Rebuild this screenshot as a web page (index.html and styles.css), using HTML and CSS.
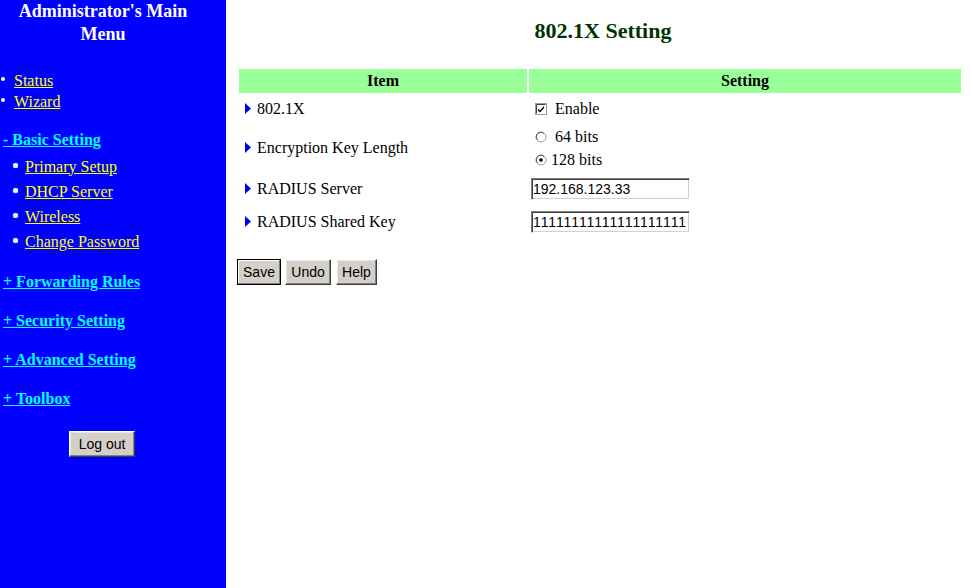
FILE: index.html
```html
<!DOCTYPE html>
<html lang="en">
<head>
    <meta charset="UTF-8">
    <title>802.1X Setting</title>
    <link rel="stylesheet" href="styles.css">
</head>
<body>
    <div class="page">
        <nav class="sidebar">
            <h2 class="menu-title">Administrator's Main<br>Menu</h2>
            <ul class="top-links">
                <li><a href="#">Status</a></li>
                <li><a href="#">Wizard</a></li>
            </ul>
            <div class="section-open"><a class="section" href="#">- Basic Setting</a></div>
            <ul class="sub-links">
                <li><a href="#">Primary Setup</a></li>
                <li><a href="#">DHCP Server</a></li>
                <li><a href="#">Wireless</a></li>
                <li><a href="#">Change Password</a></li>
            </ul>
            <div class="sections">
                <div><a class="section" href="#">+ Forwarding Rules</a></div>
                <div><a class="section" href="#">+ Security Setting</a></div>
                <div><a class="section" href="#">+ Advanced Setting</a></div>
                <div><a class="section" href="#">+ Toolbox</a></div>
            </div>
            <div class="logout-row">
                <button class="btn logout" type="button">Log out</button>
            </div>
        </nav>

        <main class="content">
            <h1 class="page-title">802.1X Setting</h1>
            <table class="setting-table">
                <thead>
                    <tr>
                        <th class="col-item">Item</th>
                        <th class="col-setting">Setting</th>
                    </tr>
                </thead>
                <tbody>
                    <tr class="row-enable">
                        <td class="item"><span class="arrow"><svg width="6" height="11" viewBox="0 0 6 11"><polygon points="0,0 6,5.5 0,11" fill="#0000ff"/></svg></span>802.1X</td>
                        <td class="setting">
                            <label class="choice">
                                <svg class="box" width="12" height="12" viewBox="0 0 12 12">
                                    <rect x="0.5" y="0.5" width="11" height="11" fill="#fff" stroke="#9a9a9a"/>
                                    <path d="M1.5 10.5V1.5H10.5" fill="none" stroke="#404040"/>
                                    <path d="M3 5.5l2 2 4-4.5v2l-4 4.5-2-2z" fill="#000"/>
                                </svg>
                                <span>&nbsp;Enable</span>
                            </label>
                        </td>
                    </tr>
                    <tr class="row-keylen">
                        <td class="item"><span class="arrow"><svg width="6" height="11" viewBox="0 0 6 11"><polygon points="0,0 6,5.5 0,11" fill="#0000ff"/></svg></span>Encryption Key Length</td>
                        <td class="setting">
                            <label class="choice">
                                <svg class="box" width="12" height="12" viewBox="0 0 12 12">
                                    <circle cx="6" cy="6" r="5" fill="#fff" stroke="#9a9a9a"/>
                                    <path d="M2.6 8.8A4 4 0 0 1 8.8 2.6" fill="none" stroke="#505050"/>
                                </svg>
                                <span>&nbsp;64 bits</span>
                            </label>
                            <label class="choice">
                                <svg class="box" width="12" height="12" viewBox="0 0 12 12">
                                    <circle cx="6" cy="6" r="5" fill="#fff" stroke="#9a9a9a"/>
                                    <path d="M2.6 8.8A4 4 0 0 1 8.8 2.6" fill="none" stroke="#505050"/>
                                    <circle cx="6" cy="6" r="1.8" fill="#000"/>
                                </svg>
                                <span>128 bits</span>
                            </label>
                        </td>
                    </tr>
                    <tr class="row-input">
                        <td class="item"><span class="arrow"><svg width="6" height="11" viewBox="0 0 6 11"><polygon points="0,0 6,5.5 0,11" fill="#0000ff"/></svg></span>RADIUS Server</td>
                        <td class="setting"><input class="field" type="text" value="192.168.123.33"></td>
                    </tr>
                    <tr class="row-input">
                        <td class="item"><span class="arrow"><svg width="6" height="11" viewBox="0 0 6 11"><polygon points="0,0 6,5.5 0,11" fill="#0000ff"/></svg></span>RADIUS Shared Key</td>
                        <td class="setting"><input class="field key-field" type="text" value="11111111111111111111"></td>
                    </tr>
                </tbody>
            </table>
            <div class="actions">
                <button class="btn btn-default save" type="button">Save</button>
                <button class="btn undo" type="button">Undo</button>
                <button class="btn help" type="button">Help</button>
            </div>
        </main>
    </div>
</body>
</html>
```

FILE: styles.css
```css
body {
    margin: 0;
    font-family: 'Liberation Serif', 'Times New Roman', serif;
    font-size: 16px;
    background-color: #fff;
}

.page {
    display: flex;
    min-height: 100vh;
}

/* left menu */
.sidebar {
    width: 206px;
    padding-right: 20px;
    background-color: #0000ff;
    flex-shrink: 0;
}

.menu-title {
    margin: 0;
    color: #fff;
    font-size: 18px;
    font-weight: bold;
    line-height: 23px;
    text-align: center;
}

.sidebar a {
    color: #ffff00;
}

.top-links,
.sub-links {
    list-style: none;
    margin: 0;
    padding: 0;
}

.top-links {
    margin-top: 23.5px;
    line-height: 21px;
}

.top-links li,
.sub-links li {
    position: relative;
}

.top-links li {
    padding-left: 14px;
}

.top-links li::before,
.sub-links li::before {
    content: '';
    position: absolute;
    width: 5px;
    height: 5px;
    border-radius: 50%;
    background-color: #fff;
    top: 50%;
    margin-top: -3px;
}

.top-links li::before {
    left: 1px;
    width: 4px;
    height: 4px;
}

.sub-links {
    margin-top: 1.5px;
    line-height: 25px;
}

.sub-links li {
    padding-left: 25px;
}

.sub-links li::before {
    left: 13px;
    background-color: #e8f0ff;
    box-shadow: 0 0 1px #c0d0ff;
}

.sidebar a.section {
    color: #00ffff;
    font-weight: bold;
}

.section-open {
    margin-top: 16.5px;
    line-height: 24px;
    padding-left: 3px;
}

.sections {
    margin-top: 8px;
    line-height: 39px;
    padding-left: 3px;
}

.logout-row {
    margin-top: 13.5px;
    padding-left: 69px;
}

/* buttons, classic look */
.btn {
    font-family: 'Liberation Sans', Arial, sans-serif;
    font-size: 14px;
    color: #000;
    background-color: #d4d0c8;
    height: 26px;
    padding: 0 5px;
    border: 1px solid;
    border-color: #fff #404040 #404040 #fff;
    box-shadow: inset -1px -1px #808080, inset 1px 1px #e8e6e0;
    cursor: pointer;
}

.logout {
    width: 66px;
}

.btn-default {
    border-color: #000;
    box-shadow: inset -1px -1px #808080, inset 1px 1px #fff;
}

.save {
    width: 44px;
}

.undo {
    width: 46px;
}

.help {
    width: 41px;
    margin-left: 1px;
}

/* main area */
.content {
    flex: 1;
    padding-top: 16px;
}

.page-title {
    margin: 0;
    padding-left: 7px;
    color: #003300;
    font-size: 22px;
    font-weight: bold;
    line-height: 30px;
    text-align: center;
}

.setting-table {
    margin: 21px 0 0 11px;
    width: 726px;
    border-spacing: 2px;
    border-collapse: separate;
    font-family: 'Liberation Serif', 'Times New Roman', serif;
    font-size: 16px;
}

.setting-table th,
.setting-table td,
.setting-table label,
.setting-table span {
    font-family: 'Liberation Serif', 'Times New Roman', serif;
}

.setting-table th {
    background-color: #99ff99;
    height: 24px;
    padding: 0;
    font-size: 16px;
    font-weight: bold;
    color: #000;
}

.col-item {
    width: 288px;
}

.setting-table td {
    padding: 0;
    vertical-align: middle;
    color: #000;
}

.item {
    padding-left: 6px !important;
}

.arrow {
    display: inline-block;
    margin-right: 6px;
    vertical-align: 0;
}

.arrow svg {
    display: block;
}

.setting {
    padding-left: 2px !important;
}

.row-enable td {
    height: 28px;
}

.row-keylen td {
    height: 46px;
}

.row-input td {
    height: 31px;
}

.choice {
    display: flex;
    align-items: center;
    height: 23px;
    padding-left: 4px;
}

.choice .box {
    display: block;
    margin-right: 4px;
}

.field {
    box-sizing: border-box;
    width: 159px;
    height: 22px;
    margin: 0;
    padding: 0 1px;
    font-family: 'Liberation Sans', Arial, sans-serif;
    font-size: 14px;
    color: #000;
    background-color: #fff;
    border: 1px solid;
    border-color: #808080 #fff #fff #808080;
    box-shadow: inset 1px 1px #404040, inset -1px -1px #d4d0c8;
    outline: none;
}

.key-field {
    letter-spacing: 0.9px;
}

.actions {
    display: flex;
    gap: 4px;
    margin: 20px 0 0 11px;
}
```
